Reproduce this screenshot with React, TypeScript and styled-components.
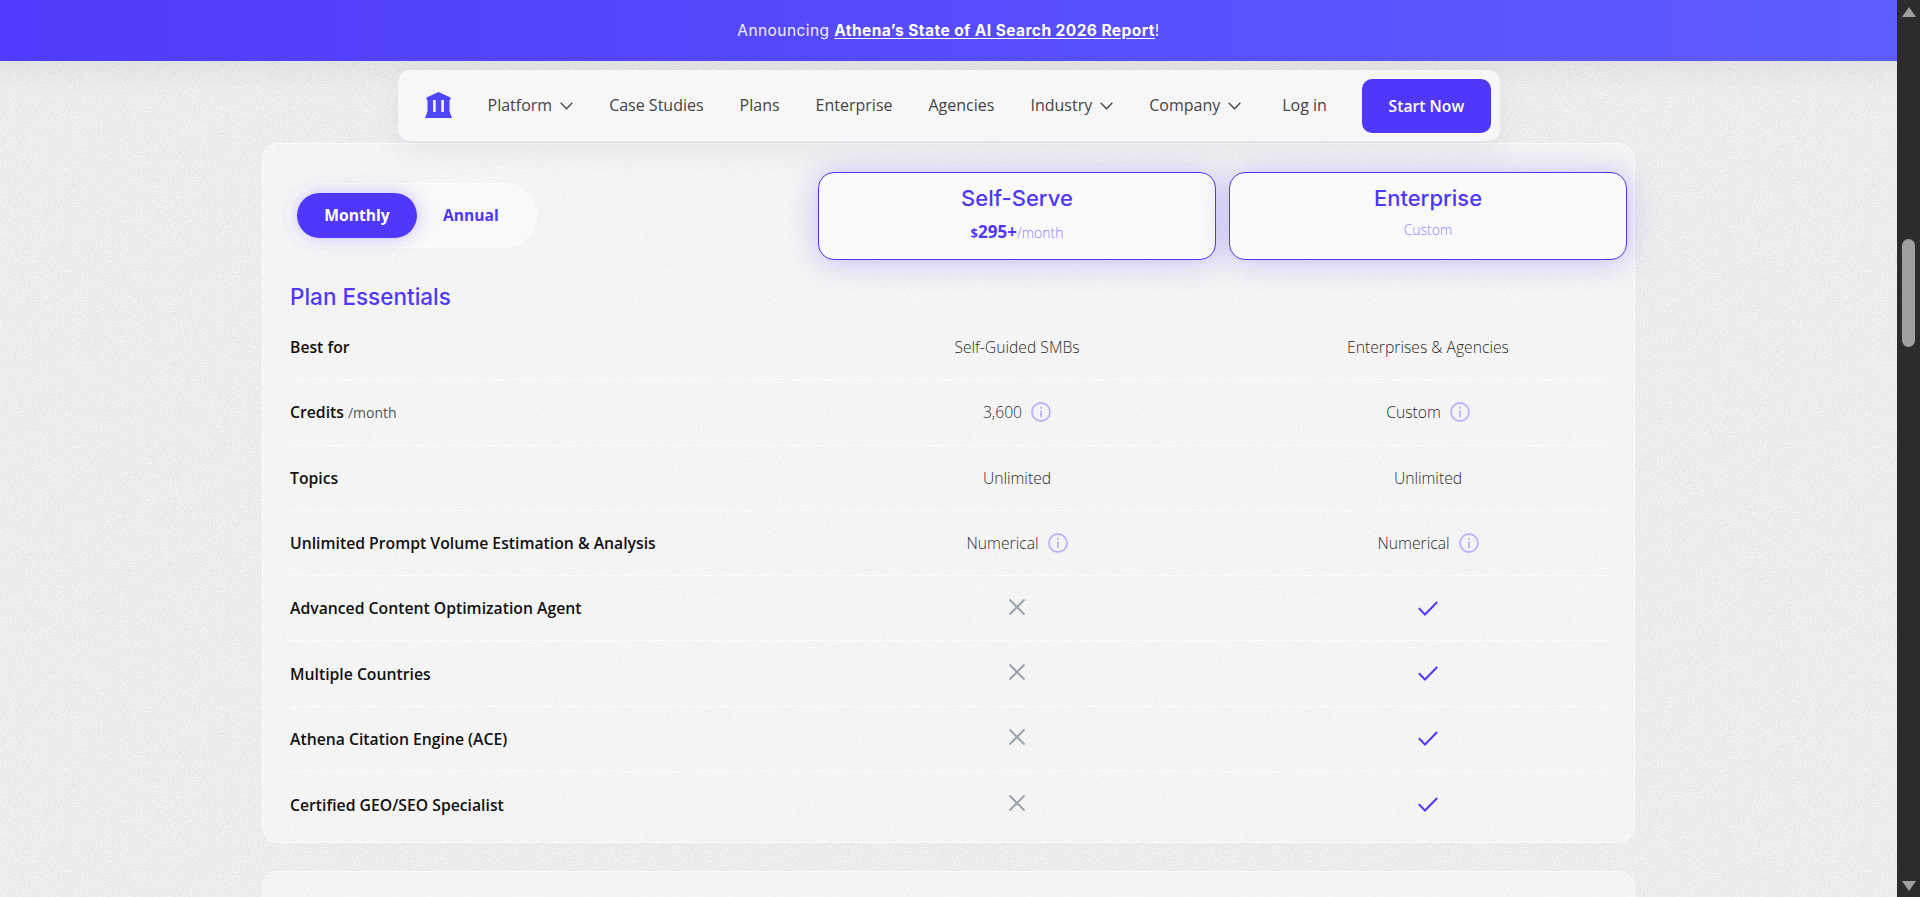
import styled, { createGlobalStyle } from "styled-components";

const noise =
  "data:image/svg+xml,%3Csvg xmlns='http://www.w3.org/2000/svg' width='300' height='300'%3E%3Cfilter id='n'%3E%3CfeTurbulence type='fractalNoise' baseFrequency='.8' numOctaves='2' stitchTiles='stitch'/%3E%3CfeColorMatrix values='0 0 0 0 1 0 0 0 0 1 0 0 0 0 1 1.8 0 0 0 -.75'/%3E%3C/filter%3E%3Crect width='300' height='300' filter='url(%23n)'/%3E%3C/svg%3E";

const GlobalStyle = createGlobalStyle`
  html, body {
    margin: 0;
    height: 100%;
    overflow: hidden;
    background: #e9e9e9;
  }
  * {
    box-sizing: border-box;
  }
`;

const PURPLE = "#4f38fb";
const BODY_FONT = `"Open Sans", "Noto Sans", sans-serif`;
const HEAD_FONT = `Inter, "Liberation Sans", sans-serif`;

const rows = [
  { label: "Best for", self: "Self-Guided SMBs", ent: "Enterprises & Agencies" },
  { label: "Credits", unit: "/month", self: "3,600", ent: "Custom", info: true },
  { label: "Topics", self: "Unlimited", ent: "Unlimited" },
  {
    label: "Unlimited Prompt Volume Estimation & Analysis",
    self: "Numerical",
    ent: "Numerical",
    info: true,
  },
  { label: "Advanced Content Optimization Agent" },
  { label: "Multiple Countries" },
  { label: "Athena Citation Engine (ACE)" },
  { label: "Certified GEO/SEO Specialist" },
];

const navLinks = [
  { label: "Platform", menu: true },
  { label: "Case Studies" },
  { label: "Plans" },
  { label: "Enterprise" },
  { label: "Agencies" },
  { label: "Industry", menu: true },
  { label: "Company", menu: true },
];

function Logo() {
  return (
    <svg width="27" height="26" viewBox="0 0 27 26" fill="#4f46fb">
      <path d="M13.5 0 L25.5 5.5 V8 H1.5 V5.5 Z" />
      <rect x="2.5" y="8" width="5.6" height="12" />
      <rect x="10.7" y="8" width="5.6" height="12" />
      <rect x="18.9" y="8" width="5.6" height="12" />
      <rect x="2" y="20" width="23" height="2" />
      <path d="M1.5 22 H25.5 L27 26 H0 Z" />
    </svg>
  );
}

function Chevron() {
  return (
    <svg width="13" height="8" viewBox="0 0 13 8" fill="none" stroke="#444444" strokeWidth="1.3">
      <path d="M0.7 0.8 L6.5 6.8 L12.3 0.8" />
    </svg>
  );
}

function InfoMark() {
  return (
    <svg width="20" height="20" viewBox="0 0 20 20" fill="none" stroke="#b9b2fd" strokeWidth="1.8">
      <circle cx="10" cy="10" r="9" />
      <circle cx="10" cy="5.8" r="1.1" fill="#b9b2fd" stroke="none" />
      <path d="M10 8.6 V15.2" />
    </svg>
  );
}

function CrossMark() {
  return (
    <CrossSvg width="18" height="18" viewBox="0 0 18 18" fill="none" stroke="#9ca3af" strokeWidth="2">
      <path d="M1.5 1.5 L16.5 16.5 M16.5 1.5 L1.5 16.5" />
    </CrossSvg>
  );
}

function CheckMark() {
  return (
    <svg width="20" height="15" viewBox="0 0 20 15" fill="none" stroke={PURPLE} strokeWidth="2">
      <path d="M0.8 7.2 L7 13.5 L19.2 1" />
    </svg>
  );
}

export default function App() {
  return (
    <Shell>
      <GlobalStyle />
      <Page>
        <Banner>
          Announcing&nbsp;<BannerLink>Athena’s State of AI Search 2026 Report</BannerLink>!
        </Banner>
        <Nav>
          <LogoSlot>
            <Logo />
          </LogoSlot>
          {navLinks.map((link) => (
            <NavLink key={link.label}>
              {link.label}
              {link.menu && <Chevron />}
            </NavLink>
          ))}
          <LogIn>Log in</LogIn>
          <StartButton>Start Now</StartButton>
        </Nav>

        <Card>
          <CardHead>
            <Toggle>
              <TogglePill>Monthly</TogglePill>
              <ToggleOption>Annual</ToggleOption>
            </Toggle>
            <Plans>
              <PlanBox>
                <PlanName>Self-Serve</PlanName>
                <PlanPrice>
                  <Dollar>$</Dollar>
                  <Amount>295+</Amount>
                  <PlanNote>/month</PlanNote>
                </PlanPrice>
              </PlanBox>
              <PlanBox>
                <PlanName>Enterprise</PlanName>
                <PlanPrice>
                  <PlanNote>Custom</PlanNote>
                </PlanPrice>
              </PlanBox>
            </Plans>
          </CardHead>

          <SectionTitle>Plan Essentials</SectionTitle>

          <Table>
            {rows.map((row) => (
              <Row key={row.label}>
                <Label>
                  {row.label}
                  {row.unit && <Unit>{row.unit}</Unit>}
                </Label>
                <Value>
                  {row.self ?? <CrossMark />}
                  {row.info && <InfoMark />}
                </Value>
                <Value>
                  {row.ent ?? <CheckMark />}
                  {row.info && <InfoMark />}
                </Value>
              </Row>
            ))}
          </Table>
        </Card>

        <NextCard />
      </Page>

      <ScrollRail>
        <ArrowUp />
        <Thumb />
        <ArrowDown />
      </ScrollRail>
    </Shell>
  );
}

const Shell = styled.div`
  display: flex;
  height: 897px;
  overflow: hidden;
`;

const Page = styled.main`
  flex: 1;
  min-width: 0;
  display: flex;
  flex-direction: column;
  align-items: center;
  overflow: hidden;
  background-color: #e9e9e9;
  background-image: url("${noise}");
  font-family: ${BODY_FONT};
  position: relative;

  &::before {
    content: "";
    position: absolute;
    top: 61px;
    left: 0;
    right: 0;
    height: 30px;
    background: linear-gradient(180deg, rgba(0, 0, 0, 0.05), rgba(0, 0, 0, 0));
  }
`;

const Banner = styled.div`
  flex: none;
  width: 100%;
  height: 61px;
  display: flex;
  align-items: center;
  justify-content: center;
  background: linear-gradient(90deg, #4e3bfb 0%, #5f5dff 100%);
  color: #f1efff;
  font-family: ${HEAD_FONT};
  font-size: 15.5px;
  letter-spacing: 0.43px;
`;

const BannerLink = styled.a`
  color: #ffffff;
  font-weight: 700;
  text-decoration: underline;
  text-underline-offset: 2px;
`;

const Nav = styled.nav`
  flex: none;
  width: 1102px;
  height: 72px;
  margin-top: 9px;
  padding: 0 9px 2px 27px;
  display: flex;
  align-items: center;
  gap: 36px;
  border-radius: 12px;
  background: #f7f7f7;
  border-bottom: 1px solid #e4e2ee;
  box-shadow: 0 10px 30px rgba(60, 50, 120, 0.07);
  font-size: 16px;
  color: #444444;
  position: relative;
  z-index: 2;
`;

const LogoSlot = styled.div`
  display: flex;
  flex: none;
`;

const NavLink = styled.a`
  display: flex;
  align-items: center;
  gap: 8px;
  white-space: nowrap;

  svg {
    margin-top: 3px;
  }
`;

const LogIn = styled.a`
  margin-left: 5px;
  margin-right: -1px;
  white-space: nowrap;
`;

const StartButton = styled.button`
  flex: none;
  width: 129px;
  height: 54px;
  margin-top: 2px;
  border: none;
  border-radius: 10px;
  background: ${PURPLE};
  color: #ffffff;
  font-family: ${BODY_FONT};
  font-size: 15.7px;
  font-weight: 600;
`;

const Card = styled.section`
  flex: none;
  width: 1373px;
  height: 700px;
  margin-top: 1px;
  padding: 28px 7px 0 24px;
  border: 1px solid #fbfbfb;
  border-radius: 16px;
  background: rgba(255, 255, 255, 0.42);
`;

const CardHead = styled.div`
  display: flex;
  align-items: center;
  justify-content: space-between;
  height: 88px;
`;

const Toggle = styled.div`
  width: 250px;
  height: 65px;
  margin-bottom: 2px;
  padding: 0 9px;
  display: flex;
  align-items: center;
  border: 1px solid #fdfdfd;
  border-radius: 33px;
  background: #f9f9f9;
`;

const TogglePill = styled.div`
  width: 120px;
  height: 45px;
  display: flex;
  align-items: center;
  justify-content: center;
  border-radius: 23px;
  background: ${PURPLE};
  box-shadow: 0 0 18px rgba(79, 56, 251, 0.3);
  color: #ffffff;
  font-size: 15.6px;
  font-weight: 700;
`;

const ToggleOption = styled.div`
  margin-left: 26px;
  color: ${PURPLE};
  font-size: 15.6px;
  font-weight: 700;
`;

const Plans = styled.div`
  display: flex;
  gap: 13px;
`;

const PlanBox = styled.div`
  width: 398px;
  height: 88px;
  display: flex;
  flex-direction: column;
  align-items: center;
  border: 1px solid ${PURPLE};
  border-radius: 16px;
  background: #fafafa;
  box-shadow: 0 2px 30px rgba(79, 56, 251, 0.3);
`;

const PlanName = styled.div`
  margin-top: 10px;
  color: ${PURPLE};
  font-family: ${HEAD_FONT};
  font-size: 22px;
  font-weight: 500;
  line-height: 30px;
`;

const PlanPrice = styled.div`
  margin-top: 7px;
  display: flex;
  align-items: baseline;
  height: 24px;
`;

const Dollar = styled.span`
  color: ${PURPLE};
  font-size: 13px;
  font-weight: 700;
`;

const Amount = styled.span`
  color: ${PURPLE};
  font-size: 17px;
  font-weight: 700;
`;

const PlanNote = styled.span`
  color: #8f80ff;
  font-size: 14px;
  font-weight: 300;
`;

const SectionTitle = styled.h2`
  margin: 23px 0 0;
  height: 32px;
  line-height: 28px;
  padding-left: 3px;
  color: ${PURPLE};
  font-family: ${HEAD_FONT};
  font-size: 22.5px;
  font-weight: 500;
`;

const Table = styled.div`
  margin: 0 20px 0 3px;
`;

const Row = styled.div`
  height: 65.3px;
  display: grid;
  grid-template-columns: 1fr 358px 358px;
  column-gap: 53px;
  align-items: center;
  border-bottom: 1px solid #fafafa;

  &:last-child {
    border-bottom: none;
  }
`;

const Label = styled.div`
  color: #111111;
  font-size: 15.75px;
  font-weight: 600;
`;

const Unit = styled.span`
  margin-left: 4px;
  color: #555555;
  font-size: 14px;
  font-weight: 400;
`;

const Value = styled.div`
  display: flex;
  align-items: center;
  justify-content: center;
  gap: 9px;
  color: #2b2b2b;
  font-size: 15.7px;
  font-weight: 300;
`;

const CrossSvg = styled.svg`
  margin-bottom: 3px;
`;

const NextCard = styled.section`
  flex: none;
  width: 1373px;
  height: 120px;
  margin-top: 28px;
  border: 1px solid #fbfbfb;
  border-radius: 16px;
  background: rgba(255, 255, 255, 0.42);
`;

const ScrollRail = styled.aside`
  flex: none;
  width: 23px;
  height: 100%;
  padding: 7px 5px 6px;
  display: flex;
  flex-direction: column;
  align-items: center;
  background: #2c2c2c;
`;

const ArrowUp = styled.div`
  width: 0;
  height: 0;
  border-left: 7px solid transparent;
  border-right: 7px solid transparent;
  border-bottom: 10px solid #a0a0a0;
`;

const Thumb = styled.div`
  width: 13px;
  height: 108px;
  margin-top: 222px;
  border-radius: 7px;
  background: #a0a0a0;
`;

const ArrowDown = styled.div`
  width: 0;
  height: 0;
  margin-top: auto;
  border-left: 7px solid transparent;
  border-right: 7px solid transparent;
  border-top: 10px solid #a0a0a0;
`;
